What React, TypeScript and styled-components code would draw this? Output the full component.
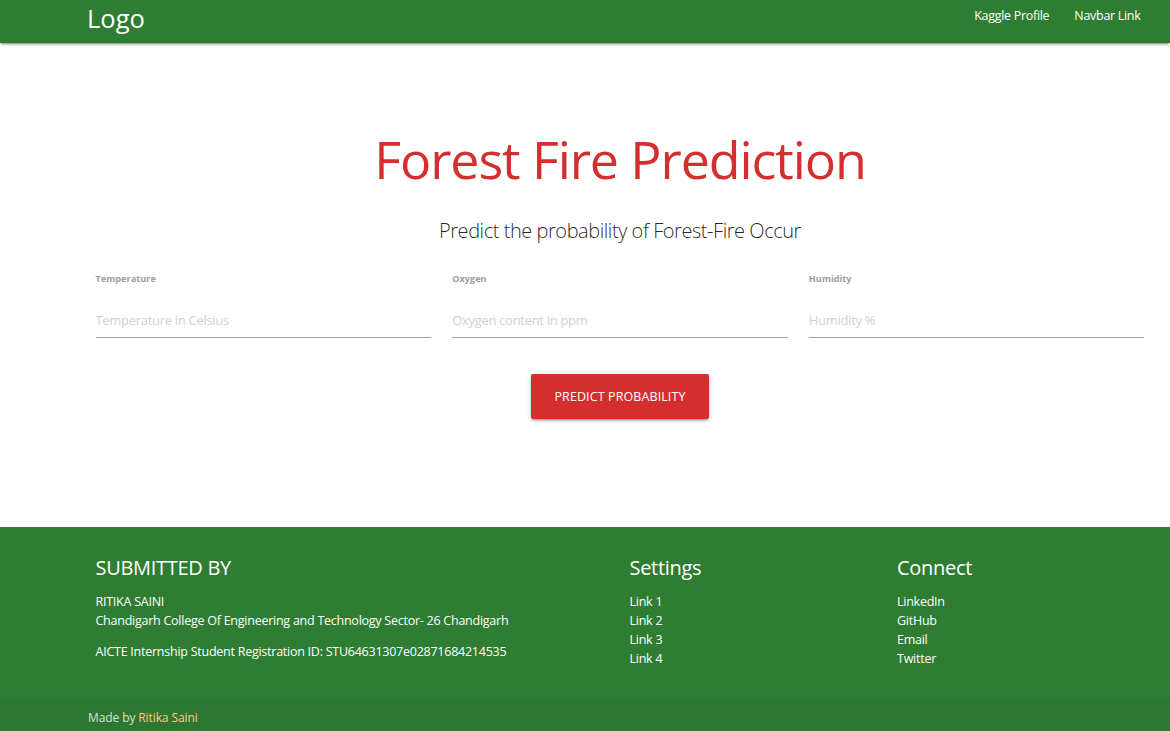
import React, { FC } from "react";
import styled, { createGlobalStyle } from "styled-components";

const GlobalStyle = createGlobalStyle`
    html, body {
        margin: 0;
        padding: 0;
        background: #fff;
    }
    body {
        font-family: "Open Sans", "Noto Sans", sans-serif;
        color: rgba(0, 0, 0, 0.87);
    }
    * {
        box-sizing: border-box;
    }
`;

const Page = styled.div`
    display: flex;
    flex-direction: column;
    min-height: 731px;
`;

const Nav = styled.nav`
    height: 43px;
    background-color: #2e7d32;
    box-shadow: 0 2px 2px 0 rgba(0, 0, 0, 0.14), 0 1px 5px 0 rgba(0, 0, 0, 0.12), 0 3px 1px -2px rgba(0, 0, 0, 0.2);
    display: flex;
    align-items: center;
    justify-content: space-between;
    padding: 0 17px 0 87px;
    position: relative;
    z-index: 1;
`;

const Brand = styled.a`
    color: #fff;
    font-size: 25.5px;
    text-decoration: none;
    line-height: 1;
    margin-top: -6px;
`;

const NavLinks = styled.ul`
    display: flex;
    margin: 0;
    padding: 0;
    list-style: none;
`;

const NavItem = styled.li`
    a {
        display: block;
        padding: 0 12.5px;
        color: #fff;
        font-size: 12.5px;
        letter-spacing: -0.3px;
        text-decoration: none;
        line-height: 1;
        margin-top: -10px;
    }
`;

const Main = styled.main`
    flex: 1;
    padding: 80px 0 0;
`;

const Container = styled.div`
    margin-left: 85px;
    width: 1070px;
`;

const Title = styled.h1`
    margin: 0;
    text-align: center;
    color: #d32f2f;
    font-size: 52px;
    font-weight: 400;
    letter-spacing: -1.1px;
    line-height: 72px;
`;

const Subtitle = styled.h5`
    margin: 21px 0 0;
    text-align: center;
    font-size: 20px;
    font-weight: 300;
    letter-spacing: -0.45px;
    line-height: 30px;
    color: rgba(0, 0, 0, 0.87);
`;

const FieldRow = styled.div`
    display: grid;
    grid-template-columns: repeat(3, 1fr);
    margin-top: 26px;
`;

const Field = styled.div`
    padding: 0 10.5px;
    display: flex;
    flex-direction: column;
`;

const Label = styled.label`
    font-size: 9.2px;
    font-weight: 700;
    color: #9e9e9e;
    line-height: 14px;
`;

const Input = styled.input`
    margin-top: 16px;
    border: none;
    border-bottom: 1px solid #9e9e9e;
    outline: none;
    height: 36px;
    padding: 0;
    font-family: inherit;
    font-size: 13px;
    letter-spacing: -0.3px;
    background: transparent;
    &::placeholder {
        color: #d1d1d1;
    }
`;

const ButtonRow = styled.div`
    display: flex;
    justify-content: center;
    margin-top: 36px;
`;

const Button = styled.button`
    height: 45px;
    padding: 0 23.5px;
    border: none;
    border-radius: 2px;
    background-color: #d32f2f;
    color: #fff;
    font-family: inherit;
    font-size: 12.5px;
    text-transform: uppercase;
    letter-spacing: 0.1px;
    box-shadow: 0 2px 2px 0 rgba(0, 0, 0, 0.14), 0 3px 1px -2px rgba(0, 0, 0, 0.12), 0 1px 5px 0 rgba(0, 0, 0, 0.2);
    cursor: pointer;
`;

const Footer = styled.footer`
    background-color: #2e7d32;
    color: #fff;
    margin-top: 107px;
`;

const FooterGrid = styled.div`
    display: grid;
    grid-template-columns: 6fr 3fr 3fr;
    padding: 27px 0 29px;
`;

const FooterCol = styled.div`
    padding: 0 10.5px;
    &:not(:first-child) {
        margin-left: -1px;
    }
`;

const FooterHeading = styled.h5`
    margin: 0 0 10px;
    font-size: 20px;
    font-weight: 400;
    letter-spacing: -0.3px;
    line-height: 28px;
`;

const FooterText = styled.p<{ gap?: boolean }>`
    margin: ${props => props.gap ? "12px" : "0"} 0 0;
    font-size: 12.5px;
    letter-spacing: -0.25px;
    line-height: 19px;
`;

const FooterLinks = styled.ul`
    margin: 0;
    padding: 0;
    list-style: none;
    li {
        font-size: 12.5px;
        letter-spacing: -0.25px;
        line-height: 19px;
    }
    a {
        color: #fff;
        text-decoration: none;
    }
`;

const Copyright = styled.div`
    background-color: rgba(51, 51, 51, 0.08);
    height: 34px;
    display: flex;
    align-items: center;
    padding: 6px 0 0 88px;
    font-size: 12px;
    letter-spacing: -0.1px;
    color: rgba(255, 255, 255, 0.8);
    a {
        color: #ffcc80;
        text-decoration: none;
        margin-left: 3px;
    }
`;

const fields = [
    { label: "Temperature", placeholder: "Temperature in Celsius" },
    { label: "Oxygen", placeholder: "Oxygen content in ppm" },
    { label: "Humidity", placeholder: "Humidity %" },
];

const App: FC = () => {
    return <Page>
        <GlobalStyle />
        <Nav>
            <Brand href="#">Logo</Brand>
            <NavLinks>
                <NavItem><a href="#">Kaggle Profile</a></NavItem>
                <NavItem><a href="#">Navbar Link</a></NavItem>
            </NavLinks>
        </Nav>
        <Main>
            <Container>
                <Title>Forest Fire Prediction</Title>
                <Subtitle>Predict the probability of Forest-Fire Occur</Subtitle>
                <FieldRow>
                    {fields.map(f => <Field key={f.label}>
                        <Label>{f.label}</Label>
                        <Input placeholder={f.placeholder} />
                    </Field>)}
                </FieldRow>
                <ButtonRow>
                    <Button>Predict Probability</Button>
                </ButtonRow>
            </Container>
        </Main>
        <Footer>
            <Container>
                <FooterGrid>
                    <FooterCol>
                        <FooterHeading>SUBMITTED BY</FooterHeading>
                        <FooterText>RITIKA SAINI</FooterText>
                        <FooterText>Chandigarh College Of Engineering and Technology Sector- 26 Chandigarh</FooterText>
                        <FooterText gap>AICTE Internship Student Registration ID: STU64631307e02871684214535</FooterText>
                    </FooterCol>
                    <FooterCol>
                        <FooterHeading>Settings</FooterHeading>
                        <FooterLinks>
                            {["Link 1", "Link 2", "Link 3", "Link 4"].map(l => <li key={l}><a href="#">{l}</a></li>)}
                        </FooterLinks>
                    </FooterCol>
                    <FooterCol>
                        <FooterHeading>Connect</FooterHeading>
                        <FooterLinks>
                            {["LinkedIn", "GitHub", "Email", "Twitter"].map(l => <li key={l}><a href="#">{l}</a></li>)}
                        </FooterLinks>
                    </FooterCol>
                </FooterGrid>
            </Container>
            <Copyright>Made by<a href="#">Ritika Saini</a></Copyright>
        </Footer>
    </Page>;
};

export default App;
